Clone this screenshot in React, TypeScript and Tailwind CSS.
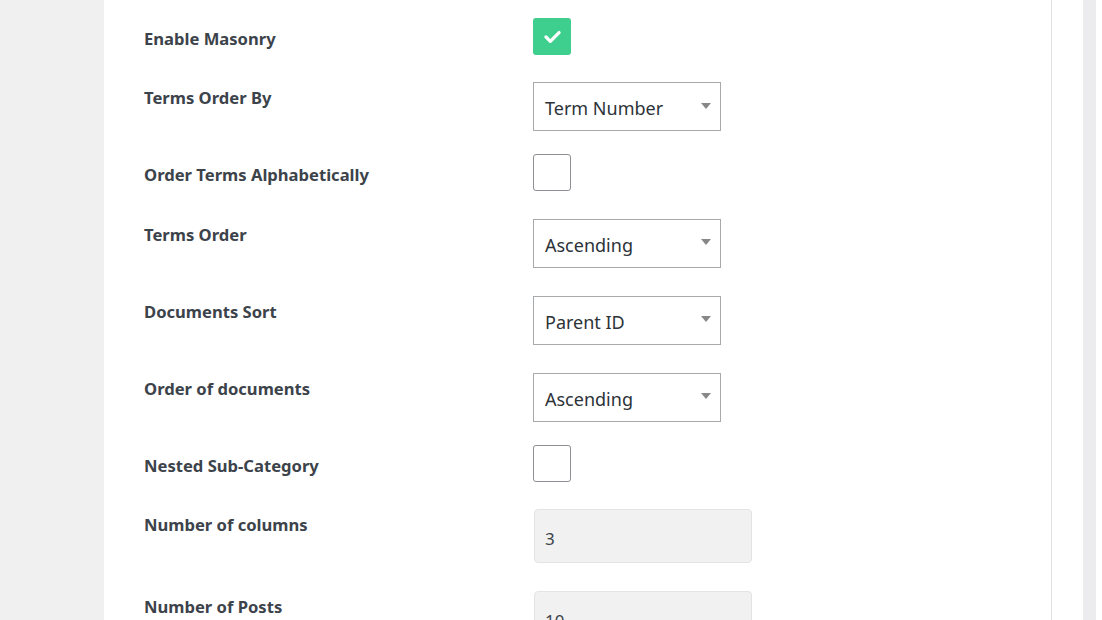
import React from "react";

type Field =
  | { kind: "check"; label: string; checked: boolean }
  | { kind: "select"; label: string; value: string }
  | { kind: "number"; label: string; value: string };

const fields: Field[] = [
  { kind: "check", label: "Enable Masonry", checked: true },
  { kind: "select", label: "Terms Order By", value: "Term Number" },
  { kind: "check", label: "Order Terms Alphabetically", checked: false },
  { kind: "select", label: "Terms Order", value: "Ascending" },
  { kind: "select", label: "Documents Sort", value: "Parent ID" },
  { kind: "select", label: "Order of documents", value: "Ascending" },
  { kind: "check", label: "Nested Sub-Category", checked: false },
  { kind: "number", label: "Number of columns", value: "3" },
  { kind: "number", label: "Number of Posts", value: "10" },
];

const Checkbox = ({ checked }: { checked: boolean }) =>
  checked ? (
    <div className="w-[38px] h-[37px] rounded-[3px] bg-[#3ecf8e] flex items-center justify-center">
      <svg width="21" height="21" viewBox="0 0 24 24" fill="none">
        <path d="M4.5 12.5l5 5L19.5 7.5" stroke="white" strokeWidth="3.8" strokeLinecap="round" strokeLinejoin="round" />
      </svg>
    </div>
  ) : (
    <div className="w-[38px] h-[37px] rounded-[3px] bg-white border border-[#8c8f94]" />
  );

const Select = ({ value }: { value: string }) => (
  <div className="w-[188px] h-[49px] border border-[#a7aaad] bg-white flex items-center justify-between pl-[11px] pr-[9px]">
    <span className="text-[18px] text-[#2c3338] pt-[4px]">{value}</span>
    <svg width="10" height="6" viewBox="0 0 10 6" className="mb-[2px]">
      <path d="M0 0h10L5 6z" fill="#888" />
    </svg>
  </div>
);

const NumberInput = ({ value }: { value: string }) => (
  <div className="ml-px w-[218px] h-[54px] rounded-[4px] border border-[#e4e4e4] bg-[#f1f1f1] flex items-center pl-[10px]">
    <span className="text-[17px] text-[#3c434a] pt-[5px]">{value}</span>
  </div>
);

const Row = ({ field }: { field: Field }) => {
  const ctrl =
    field.kind === "check" ? "pt-[10px] pb-[12.5px]" : "pt-[15px] pb-[13px]";
  return (
    <div className="flex items-start">
      <div className="w-[389px] pt-[20px] text-[16.6px] leading-[22px] font-bold text-[#3c434a]">
        {field.label}
      </div>
      <div className={ctrl}>
        {field.kind === "check" && <Checkbox checked={field.checked} />}
        {field.kind === "select" && <Select value={field.value} />}
        {field.kind === "number" && <NumberInput value={field.value} />}
      </div>
    </div>
  );
};

export default function App() {
  return (
    <div
      className="h-[620px] w-[1102px] overflow-hidden flex bg-white"
      style={{ fontFamily: '"Noto Sans", "Open Sans", sans-serif' }}
    >
      <div className="w-[104px] shrink-0 bg-[#f0f0f1]" />
      <div className="w-[948px] shrink-0 border-r border-[#e2e2e2] pl-[40px] pt-[7.6px]">
        {fields.map((f) => (
          <Row key={f.label} field={f} />
        ))}
      </div>
      <div className="w-[31px] shrink-0" />
      <div className="w-[13px] shrink-0 bg-[#ececee]" />
    </div>
  );
}
